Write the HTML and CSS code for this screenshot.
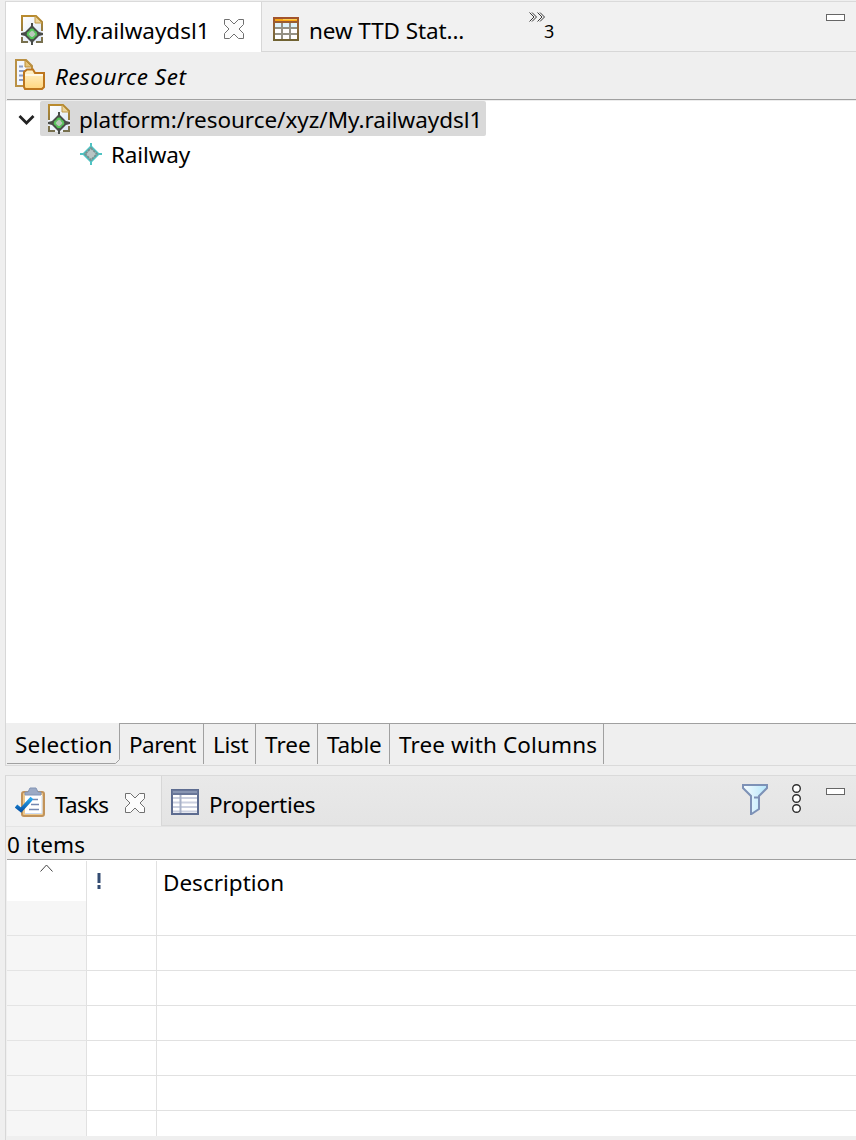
FILE: index.html
```html
<!DOCTYPE html>
<html lang="en">
<head>
<meta charset="utf-8">
<title>My.railwaydsl1</title>
<link rel="stylesheet" href="styles.css">
</head>
<body>
<svg class="defs" width="0" height="0">
  <defs>
    <linearGradient id="paper" x1="0" y1="0" x2="1" y2="1"><stop offset="0" stop-color="#fff"/><stop offset="1" stop-color="#dbe6f6"/></linearGradient>
    <linearGradient id="edge" x1="0" y1="0" x2="0" y2="1"><stop offset="0" stop-color="#b98b2f"/><stop offset="1" stop-color="#77704f"/></linearGradient>
    <linearGradient id="fold" x1="0" y1="0" x2="0" y2="1"><stop offset="0" stop-color="#fff3cf"/><stop offset="1" stop-color="#ffd67e"/></linearGradient>
    <linearGradient id="grid" x1="0" y1="0" x2="0" y2="1"><stop offset="0" stop-color="#a4522b"/><stop offset=".5" stop-color="#8b6a3c"/><stop offset="1" stop-color="#6f6232"/></linearGradient>
    <linearGradient id="sky" x1="0" y1="0" x2="1" y2="0"><stop offset="0" stop-color="#f6fcff"/><stop offset="1" stop-color="#b5e6fb"/></linearGradient>
    <linearGradient id="check" x1="0" y1="0" x2="0" y2="1"><stop offset="0" stop-color="#2aaaf0"/><stop offset="1" stop-color="#0758ad"/></linearGradient>
    <symbol id="model" viewBox="0 0 24 30">
      <path d="M1 1H15L21 7V27H1Z" fill="url(#paper)" stroke="url(#edge)" stroke-width="2"/>
      <path d="M14 1V8H21Z" fill="#ecd49a" stroke="#c09a48" stroke-width="1"/>
      <path d="M0 16H2V22H0ZM20 16H22V22H20ZM7 26H15V28H7Z" fill="#eef1f6"/>
      <path d="M10 8H12V11L18 17L22 18V20L18 21L12 27V30H10V27L4 21L0 20V18L4 17L10 11Z" fill="#484b48"/>
      <path d="M11 14L16 19L11 24L6 19Z" fill="#b9c7bb" stroke="#52c757" stroke-width="2" stroke-dasharray="3 .6"/>
    </symbol>
    <symbol id="close" viewBox="0 0 20 20">
      <path d="M.5 .5H5.500L10 5L14.500 .5H19.500V5.500L15 10L19.500 14.500V19.500H14.500L10 15L5.500 19.500H.5V14.500L5 10L.5 5.500Z" fill="#fcfcfc" stroke="#707070"/>
    </symbol>
  </defs>
</svg>
<main class="workbench">
  <section class="panel editor">
    <header class="tabs editor-tabs">
      <div class="tab tab-active">
        <svg class="icon-model" width="24" height="30"><use href="#model"/></svg>
        <span class="label t-file">My.railwaydsl1</span>
        <svg class="close" width="20" height="20"><use href="#close"/></svg>
      </div>
      <div class="tab-rest">
        <svg class="icon-table" width="26" height="24" viewBox="0 0 26 24">
          <rect width="26" height="24" fill="url(#grid)"/>
          <rect x="2" y="2" width="22" height="2" fill="#f9a714"/><rect x="10" y="2" width="14" height="1" fill="#ffd050"/>
          <g fill="#dff3fb"><rect x="2" y="6" width="6" height="4"/><rect x="10" y="6" width="6" height="4"/><rect x="18" y="6" width="6" height="4"/></g>
          <g fill="#fff"><rect x="2" y="12" width="6" height="4"/><rect x="10" y="12" width="6" height="4"/><rect x="18" y="12" width="6" height="4"/><rect x="2" y="18" width="6" height="4"/><rect x="10" y="18" width="6" height="4"/><rect x="18" y="18" width="6" height="4"/></g>
          <path d="M9 6V22M17 6V22M2 11H24M2 17H24" stroke="#949184" stroke-width="2"/>
        </svg>
        <span class="label t-new">new TTD Stat...</span>
        <div class="overflow">
          <svg width="16" height="10" viewBox="0 0 16 10"><path d="M.5 .5L5 5L.5 9.500M3 .5L7.500 5L3 9.500M8.500 .5L13 5L8.500 9.500M11 .5L15.500 5L11 9.500" fill="none" stroke="#222" stroke-width=".9"/></svg>
          <span class="count">3</span>
        </div>
        <i class="minimize"></i>
      </div>
    </header>
    <div class="toolbar">
      <svg width="31" height="31" viewBox="0 0 31 31">
        <path d="M1 1H11L17 7V27H1Z" fill="#f3f7ff" stroke="#ba9145" stroke-width="2"/>
        <path d="M10 1V8H17Z" fill="#e5c47b" stroke="#bd8d36"/>
        <path d="M4 7.500H8M4 12H12M4 16.500H10M4 21H9" stroke="#8b9ec8" stroke-width="2"/>
        <path d="M9 28V13L12 10.500H18L20 14H29V28L27 30H10Z" fill="url(#fold)" stroke="#bd761e" stroke-width="2"/>
        <path d="M10 16H28" stroke="#fff8e5" stroke-width="2"/>
      </svg>
      <span class="label t-set">Resource Set</span>
    </div>
    <div class="tree">
      <div class="root-row">
        <svg class="chevron" width="17" height="12" viewBox="0 0 17 12"><path d="M1.500 2L8.500 9L15.500 2" fill="none" stroke="#222" stroke-width="2.800"/></svg>
        <div class="selected">
          <svg width="24" height="30"><use href="#model"/></svg>
          <span class="label t-platform">platform:/resource/xyz/My.railwaydsl1</span>
        </div>
      </div>
      <div class="child-row">
        <svg width="22" height="22" viewBox="0 0 22 22"><path d="M10 0H12V3L19 10H22V12H19L12 19V22H10V19L3 12H0V10H3L10 3Z" fill="#4fc3c3"/><path d="M11 5L17 11L11 17L5 11Z" fill="#b9c5c5" stroke="#77908f" stroke-width="1.800" stroke-dasharray="2.500 .8"/></svg>
        <span class="label t-railway">Railway</span>
      </div>
    </div>
    <nav class="pages">
      <div class="page page-active">
        <svg class="outline" width="113" height="41" viewBox="0 0 113 41"><path d="M0 40.500H108.500L112.500 36.500V0" fill="none" stroke="#a0a0a0"/></svg>
        <span class="label t-selection">Selection</span>
      </div>
      <div class="page p-parent"><span class="label t-parent">Parent</span></div>
      <div class="page p-list"><span class="label t-list">List</span></div>
      <div class="page p-tree"><span class="label t-tree">Tree</span></div>
      <div class="page p-table"><span class="label t-table">Table</span></div>
      <div class="page p-cols"><span class="label t-cols">Tree with Columns</span></div>
      <div class="page-fill"></div>
    </nav>
  </section>

  <section class="panel tasks">
    <header class="tabs task-tabs">
      <div class="tab task-active">
        <svg class="icon-tasks" width="31" height="31" viewBox="0 0 31 31">
          <rect x="7" y="5" width="22" height="24" rx="2" fill="#edc98e" stroke="#c2935a" stroke-width="2"/>
          <rect x="10" y="8" width="17" height="19" fill="#fff"/>
          <path d="M10 26.500H27V9" fill="none" stroke="#cbd9ef"/>
          <path d="M10 8V5H13L15 1H21L23 5H26V8Z" fill="#9caac5" stroke="#8294b5"/>
          <path d="M18 12.500H23M16 17.500H24M14 22.500H24" stroke="#7587b0" stroke-width="1.700"/>
          <path d="M1 19L6 23L17 11" fill="none" stroke="url(#check)" stroke-width="4"/>
        </svg>
        <span class="label t-tasks">Tasks</span>
        <svg class="close" width="20" height="20"><use href="#close"/></svg>
      </div>
      <div class="tab-rest task-rest">
        <svg class="icon-props" width="28" height="26" viewBox="0 0 28 26">
          <rect x="1" y="1" width="26" height="24" fill="#fff" stroke="#5d6c90" stroke-width="2"/>
          <rect x="1" y="1" width="26" height="5" fill="#697799"/><path d="M2 3H26" stroke="#94a1bd" stroke-width="1.500"/>
          <path d="M2 9H26M2 13.500H26M2 18H26M2 22.500H26" stroke="#cbd0df" stroke-width="2"/>
          <path d="M9.500 6V24" stroke="#a9b2c8" stroke-width="2"/>
        </svg>
        <span class="label t-props">Properties</span>
        <div class="actions">
          <svg width="26" height="31" viewBox="0 0 26 31"><path d="M1 1H25V4L17 12V25L9.500 30H9V12L1 4Z" fill="url(#sky)" stroke="#7d91b6" stroke-width="2"/><path d="M12 13.500H17" stroke="#7d91b6" stroke-width="2"/></svg>
          <svg width="10" height="30" viewBox="0 0 10 30"><g fill="#fff" stroke="#303030" stroke-width="1.400"><circle cx="4.500" cy="4.500" r="3.800"/><circle cx="4.500" cy="14.500" r="3.800"/><circle cx="4.500" cy="24.500" r="3.800"/></g></svg>
        </div>
        <i class="minimize"></i>
      </div>
    </header>
    <div class="status"><span class="label t-items">0 items</span></div>
    <div class="table">
      <div class="row head">
        <div class="cell c1"><svg width="14" height="8" viewBox="0 0 14 8"><path d="M.5 7.500L6.500 1L12.500 7.500" fill="none" stroke="#444"/></svg></div>
        <div class="cell c2"><svg width="4" height="16" viewBox="0 0 4 16"><path d="M.5 0H3.500V10H.5ZM.5 12H3.500V16H.5Z" fill="#344c72"/></svg></div>
        <div class="cell c3"><span class="label t-desc">Description</span></div>
      </div>
      <div class="row first"><div class="cell c1"></div><div class="cell c2"></div><div class="cell c3"></div></div>
      <div class="row"><div class="cell c1"></div><div class="cell c2"></div><div class="cell c3"></div></div>
      <div class="row"><div class="cell c1"></div><div class="cell c2"></div><div class="cell c3"></div></div>
      <div class="row"><div class="cell c1"></div><div class="cell c2"></div><div class="cell c3"></div></div>
      <div class="row"><div class="cell c1"></div><div class="cell c2"></div><div class="cell c3"></div></div>
      <div class="row"><div class="cell c1"></div><div class="cell c2"></div><div class="cell c3"></div></div>
      <div class="row last"><div class="cell c1"></div><div class="cell c2"></div><div class="cell c3"></div></div>
    </div>
  </section>
</main>
</body>
</html>
```
FILE: styles.css
```css
* { box-sizing: border-box; }
body { margin: 0; background: #efefef; color: #000; font: 22.5px/30px "Noto Sans", sans-serif; overflow: hidden; }
svg { display: block; flex: none; }
.defs { position: absolute; }
.workbench { width: 856px; height: 1140px; padding: 1px 0 0 5px; display: flex; flex-direction: column; gap: 9px; }
.panel { border-left: 1px solid #d7d7d7; border-top: 1px solid #dadada; display: flex; flex-direction: column; }
.label { white-space: nowrap; flex: none; }
.t-file { letter-spacing: -.05px; }
.t-new { letter-spacing: -.1px; }
.t-set { letter-spacing: .5px; }
.t-platform { letter-spacing: -.03px; }
.t-railway { letter-spacing: -.15px; }
.t-selection { letter-spacing: .2px; }
.t-parent { letter-spacing: -.5px; }
.t-list, .t-table { letter-spacing: -.25px; }
.t-cols { letter-spacing: .12px; }
.t-tasks { letter-spacing: -.7px; }
.t-props { letter-spacing: -.3px; }
.t-items { letter-spacing: .15px; }
.editor { height: 765px; border-bottom: 1px solid #dadada; }
.tabs { display: flex; flex: none; height: 50px; }
.tab { display: flex; flex: none; }
.tab-active { width: 255px; background: #fff; padding: 13px 0 0 15px; }
.tab-active .label { margin: 1px 0 0 10px; width: 153px; }
.tab-active .close { margin: 4px 0 0 16px; }
.tab-rest { flex: 1; display: flex; border-left: 1px solid #d7d7d7; border-bottom: 1px solid #d7d7d7; background: #f1f1f1; }
.icon-table { margin: 15px 0 0 11px; }
.editor-tabs .tab-rest .label { margin: 14px 0 0 10px; width: 157px; }
.overflow { display: flex; flex-direction: column; width: 27px; margin: 10px 0 0 63px; }
.count { font-size: 18px; line-height: 22px; margin: -2px 0 0 15px; }
.minimize { display: block; width: 19px; height: 7px; border: 1px solid #666; background: #fff; margin: 12px 11px 0 auto; }
.toolbar { height: 48px; flex: none; display: flex; margin-left: 1px; padding: 7px 0 0 8px; border-bottom: 1px solid #a0a0a0; }
.toolbar .label { font-style: italic; margin: 3px 0 0 9px; }
.tree { flex: 1; min-height: 0; background: #fff; border-top: 1px solid #ececec; padding-left: 11px; }
.root-row { display: flex; height: 35px; }
.chevron { margin: 13px 0 0 1px; }
.selected { display: flex; width: 446px; margin-left: 5px; background: #d9d9d9; border-radius: 2px; padding: 3px 0 0 8px; }
.selected .label { margin: 1px 0 0 7px; }
.child-row { display: flex; padding: 7px 0 0 63px; }
.child-row .label { margin: -3px 0 0 9px; }
.pages { height: 42px; flex: none; display: flex; margin-left: 1px; }
.page { height: 41px; padding: 6px 0 0 9px; border-top: 1px solid #a0a0a0; border-right: 1px solid #a0a0a0; }
.page-active { position: relative; width: 113px; border: 0; padding: 7px 0 0 8px; }
.outline { position: absolute; left: 0; top: 0; }
.p-parent { width: 84px; }
.p-list { width: 52px; }
.p-tree { width: 62px; }
.p-table { width: 72px; }
.p-cols { width: 214px; }
.page-fill { flex: 1; border-top: 1px solid #a0a0a0; }
.tasks { height: 365px; }
.task-tabs { height: 51px; border-bottom: 1px solid #e4e4e4; }
.task-active { width: 155px; background: #f1f1f1; padding: 11px 0 0 9px; }
.task-active .label { margin: 3px 0 0 9px; width: 54px; }
.task-active .close { margin: 6px 0 0 16px; }
.task-rest { background: linear-gradient(#e9e9e9, #e4e4e4); border-bottom: 1px solid #d9d9d9; }
.icon-props { margin: 13px 0 0 9px; }
.task-rest .label { margin: 14px 0 0 10px; }
.actions { display: flex; gap: 24px; margin: 8px 0 0 auto; }
.task-rest .minimize { margin: 12px 11px 0 24px; }
.status { height: 33px; flex: none; margin-left: 1px; border-bottom: 1px solid #a0a0a0; padding: 3px 0 0; }
.table { margin-left: 1px; padding-top: 1px; background: #fff; }
.row { display: flex; height: 35px; }
.cell { border-right: 1px solid #e1e1e1; border-bottom: 1px solid #e1e1e1; }
.c1 { width: 80px; background: #f6f6f6; border-bottom-color: #e4e4e4; }
.c2 { width: 70px; }
.c3 { flex: 1; border-right: 0; }
.head { height: 40px; }
.head .cell { border-bottom: 0; background: #fff; }
.head .c1 { padding: 3px 0 0 33px; }
.head .c2 { padding: 12px 0 0 10px; }
.head .c3 { padding: 7px 0 0 6px; }
.last { height: 25px; }
.last .cell { border-bottom: 0; }
```
